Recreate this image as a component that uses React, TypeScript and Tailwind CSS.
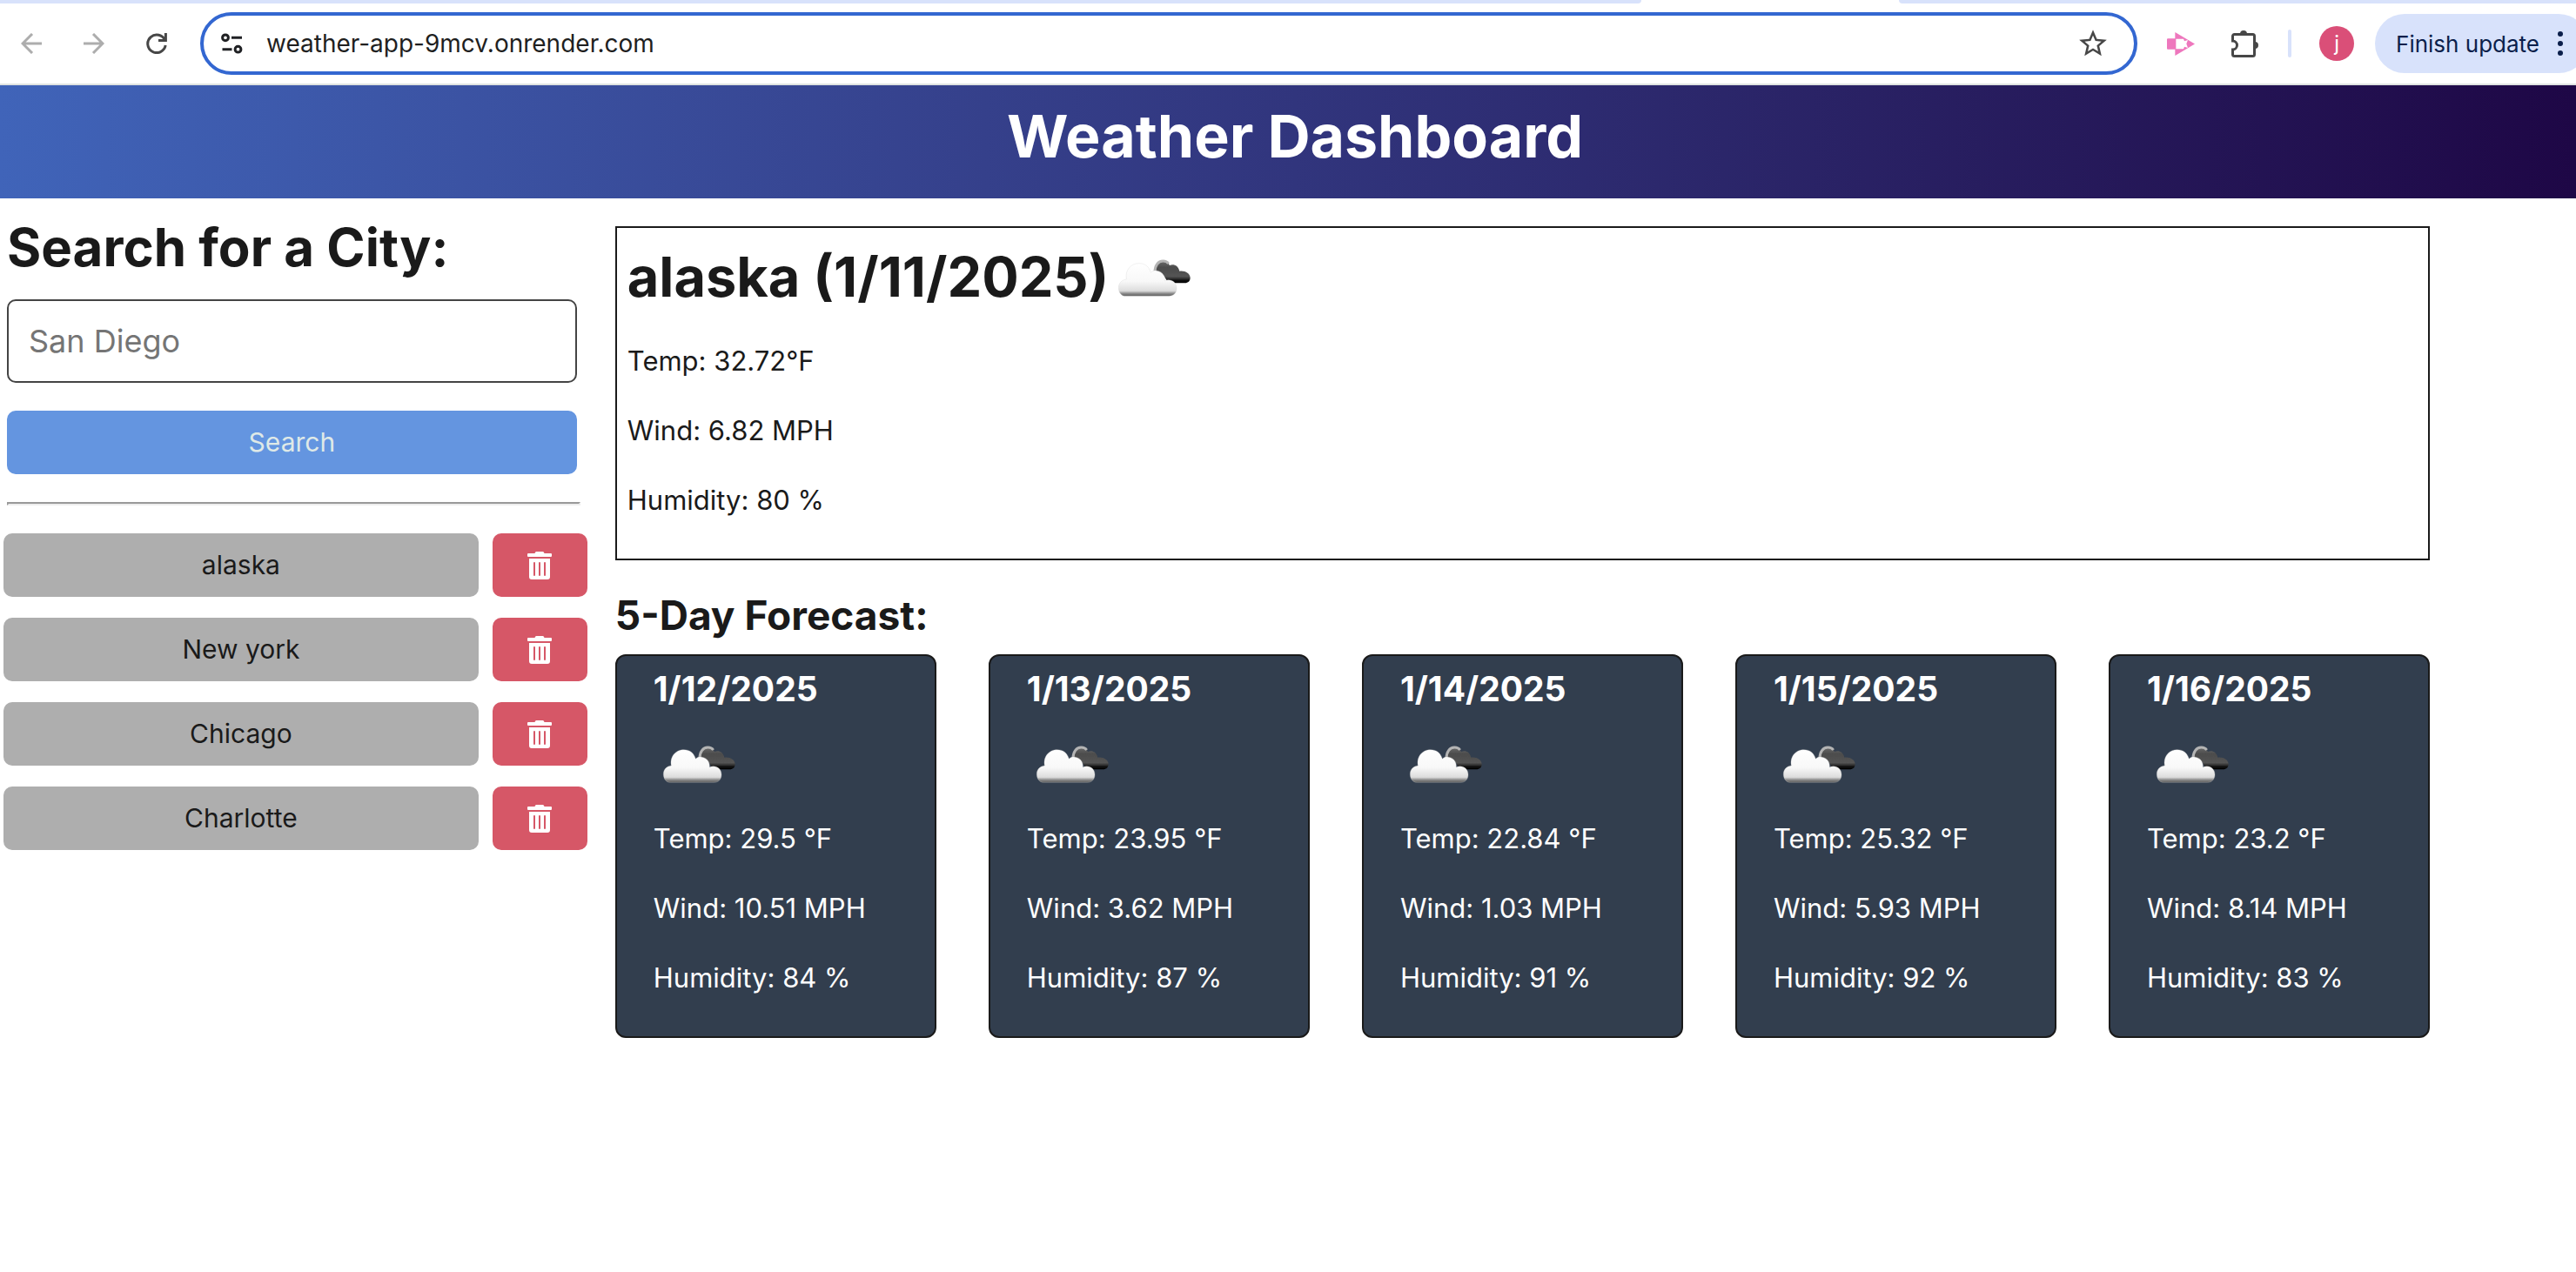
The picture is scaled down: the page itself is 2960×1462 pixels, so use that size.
import { useId } from "react";
import { FaTrashAlt } from "react-icons/fa";
import { MdStarBorder } from "react-icons/md";

const cities = ["alaska", "New york", "Chicago", "Charlotte"];

const forecast = [
  { date: "1/12/2025", temp: "29.5", wind: "10.51", humidity: "84" },
  { date: "1/13/2025", temp: "23.95", wind: "3.62", humidity: "87" },
  { date: "1/14/2025", temp: "22.84", wind: "1.03", humidity: "91" },
  { date: "1/15/2025", temp: "25.32", wind: "5.93", humidity: "92" },
  { date: "1/16/2025", temp: "23.2", wind: "8.14", humidity: "83" },
];

function CloudIcon({ className = "" }: { className?: string }) {
  const id = useId();
  const front =
    "M58 163 C43 163 34 150 34 134 C34 118 45 107 61 105 C55 72 78 50 104 50 C125 50 140 62 145 82 C152 74 162 74 172 77 C187 82 194 94 193 110 C214 102 234 114 234 136 C234 152 224 163 208 163 Z";
  const back =
    "M158 76 C160 56 172 42 187 42 C198 42 206 48 210 57 C224 51 240 58 244 77 C262 74 281 84 281 100 C281 111 274 118 262 118 L205 118 L190 92 Z";
  return (
    <svg viewBox="0 0 312 192" className={`h-16 w-[104px] shrink-0 ${className}`} role="img" aria-label="broken clouds">
      <defs>
        <linearGradient id={`${id}f`} x1="0" y1="50" x2="0" y2="163" gradientUnits="userSpaceOnUse">
          <stop offset="0" stopColor="#ffffff" />
          <stop offset="0.55" stopColor="#f8f8f8" />
          <stop offset="0.84" stopColor="#dcdcdc" />
          <stop offset="0.92" stopColor="#8c8c8c" />
          <stop offset="1" stopColor="#5c5c5c" />
        </linearGradient>
        <linearGradient id={`${id}b`} x1="0" y1="42" x2="0" y2="118" gradientUnits="userSpaceOnUse">
          <stop offset="0" stopColor="#6a6a6a" />
          <stop offset="0.3" stopColor="#4c4c4c" />
          <stop offset="0.7" stopColor="#545454" />
          <stop offset="0.9" stopColor="#0c0c0c" />
          <stop offset="1" stopColor="#000000" />
        </linearGradient>
        <filter id={`${id}s`} x="-10%" y="-10%" width="120%" height="120%">
          <feGaussianBlur stdDeviation="1.6" />
        </filter>
      </defs>
      <g filter={`url(#${id}s)`}>
        <path d={back} fill={`url(#${id}b)`} />
        <path d="M159 80 C159 58 170 42 187 42 C195 42 202 45 206 51" fill="none" stroke="#b4b4b4" strokeWidth="9" />
        <path d={front} fill={`url(#${id}f)`} stroke="#d0d0d0" strokeWidth="1.5" strokeOpacity="0.6" />
      </g>
    </svg>
  );
}

function BrowserBar() {
  return (
    <div className="overflow-hidden border-b-2 border-[#dfe3e1] bg-white">
      <div className="flex h-1 justify-between">
        <div className="w-[63.7%] rounded-br-xl bg-[#d8e2fb]" />
        <div className="w-[26.3%] rounded-bl-xl bg-[#d8e2fb]" />
      </div>
      <div className="flex h-[92px] items-center pl-6">
        <div className="flex items-center gap-12">
          <button type="button" aria-label="Back">
            <svg viewBox="0 0 24 24" className="size-6" fill="none" stroke="#adadad" strokeWidth="3">
              <path d="M13 1 L2 12 L13 23 M2 12 H24" />
            </svg>
          </button>
          <button type="button" aria-label="Forward">
            <svg viewBox="0 0 24 24" className="size-6" fill="none" stroke="#adadad" strokeWidth="3">
              <path d="M11 1 L22 12 L11 23 M22 12 H0" />
            </svg>
          </button>
          <button type="button" aria-label="Reload">
            <svg viewBox="0 0 24 24" className="size-6" fill="none" stroke="#474747" strokeWidth="3">
              <path d="M22.4 0 V8.6 H14" />
              <path d="M21.6 8.4 A10.3 10.3 0 1 0 22.2 14" />
            </svg>
          </button>
        </div>

        <div className="ml-[38px] flex h-[72px] flex-1 items-center rounded-full border-4 border-[#3367d1] pr-7 pl-5">
          <button type="button" aria-label="View site information">
            <svg viewBox="0 0 26 26" className="size-[26px]" fill="none" stroke="#202124" strokeWidth="3">
              <circle cx="5" cy="6.3" r="3.4" />
              <path d="M12 6.3 H24 M1.5 19.7 H12.5" />
              <circle cx="19.5" cy="19.7" r="3.4" />
            </svg>
          </button>
          <input
            type="text"
            aria-label="Address and search bar"
            defaultValue="weather-app-9mcv.onrender.com"
            className="ml-[26px] min-w-0 flex-1 bg-transparent text-[28px] leading-10 text-[#1f1f1f] outline-none"
          />
          <button type="button" aria-label="Bookmark this tab">
            <MdStarBorder size={38} color="#474747" />
          </button>
        </div>

        <button type="button" aria-label="Screen recorder extension" className="ml-[34px]">
          <svg viewBox="0 0 96 81" className="h-[27px] w-8">
            <path d="M3 22 H28 V59 H3 a3 3 0 0 1-3-3 V25 a3 3 0 0 1 3-3 Z M28 0 L96 40.5 L28 81 Z" fill="#ee77bd" />
            <path d="M31 23 H57 L60 31 L72 27 L67 40 L72 54 L60 50 L57 58 H31 Z" fill="#ffffff" />
          </svg>
        </button>
        <button type="button" aria-label="Extensions" className="ml-[41px]">
          <svg viewBox="0 0 34 34" className="size-[34px]" fill="none" stroke="#474747" strokeWidth="3">
            <path d="M4.5 6.5 H25.5 a2 2 0 0 1 2 2 V29.5 a2 2 0 0 1-2 2 H4.5 a2 2 0 0 1-2-2 V24 A5 5 0 0 0 2.5 14 V8.5 a2 2 0 0 1 2-2 Z" />
            <path d="M11 6 a4 4 0 0 1 8 0 Z M28 15 a4 4 0 0 1 0 8 Z" fill="#474747" stroke="none" />
          </svg>
        </button>
        <div className="ml-8 h-8 w-1 rounded-full bg-[#d8e2fb]" />
        <button
          type="button"
          aria-label="Profile j"
          className="ml-8 size-10 rounded-full bg-[#da4f78] text-center text-2xl leading-10 text-white"
        >
          j
        </button>
        <button
          type="button"
          className="-mr-[14px] ml-6 flex h-[68px] items-center rounded-full bg-[#d8e2fb] pr-7 pl-6 text-[26px] text-[#0b1f4b]"
        >
          Finish update
          <svg viewBox="0 0 8 28" className="ml-5 h-7 w-2" fill="#0b1f4b">
            <circle cx="4" cy="3" r="3" />
            <circle cx="4" cy="14" r="3" />
            <circle cx="4" cy="25" r="3" />
          </svg>
        </button>
      </div>
    </div>
  );
}

function Sidebar() {
  return (
    <aside className="pt-5">
      <form className="mr-[18px] ml-2" onSubmit={(e) => e.preventDefault()}>
        <label htmlFor="city" className="block text-[60px] leading-[72px] font-bold">
          Search for a City:
        </label>
        <input
          id="city"
          type="text"
          placeholder="San Diego"
          className="mt-6 block h-24 w-full rounded-[10px] border-2 border-[#444444] px-[23px] text-[36px] placeholder:text-[#757575]"
        />
        <button
          type="submit"
          className="mt-8 block w-full rounded-[10px] bg-[#6495e0] text-[30px] leading-[73px] text-[#dfe9e7]"
        >
          Search
        </button>
      </form>
      <hr className="mt-8 mr-[14px] ml-2 border-2 border-t-[#999999] border-r-[#eeeeee] border-b-[#eeeeee] border-l-[#999999]" />
      <ul className="mt-8 mr-[6px] ml-1 flex flex-col gap-6">
        {cities.map((city) => (
          <li key={city} className="flex gap-4">
            <button type="button" className="flex-1 rounded-[10px] bg-[#aeaeae] text-[30px] leading-[73px]">
              {city}
            </button>
            <button
              type="button"
              aria-label={`Delete ${city}`}
              className="flex w-[109px] items-center justify-center rounded-[10px] bg-[#d65767] text-white"
            >
              <FaTrashAlt size={32} />
            </button>
          </li>
        ))}
      </ul>
    </aside>
  );
}

export default function App() {
  return (
    <div className="min-h-screen bg-white font-[Inter,sans-serif] text-[#1a1a1a]">
      <BrowserBar />
      <header className="bg-linear-to-r from-[#4064b9] to-[#1e0746] pt-[18px] pb-8 pl-4 text-center text-white">
        <h1 className="text-[68px] leading-[80px] font-bold">Weather Dashboard</h1>
      </header>
      <div className="grid grid-cols-[23fr_77fr]">
        <Sidebar />
        <main className="pt-8 pr-[168px] pl-[26px]">
          <section className="border-2 border-[#1a1a1a] pt-[18px] pb-[43px] pl-3">
            <h2 className="flex items-center text-[63px] leading-[76px] font-bold">
              alaska (1/11/2025)
              <CloudIcon />
            </h2>
            <div className="mt-[35px] flex flex-col gap-8 text-[31px] leading-[48px]">
              <p>Temp: 32.72°F</p>
              <p>Wind: 6.82 MPH</p>
              <p>Humidity: 80 %</p>
            </div>
          </section>
          <section className="mt-[35px]">
            <h2 className="text-[46px] leading-[56px] font-bold">5-Day Forecast:</h2>
            <div className="mt-[17px] grid grid-cols-5 gap-[60px]">
              {forecast.map((day) => (
                <article
                  key={day.date}
                  className="rounded-xl border-2 border-[#1a1a1a] bg-[#323e4e] pt-[14px] pb-[43px] pl-[42px] text-white"
                >
                  <h3 className="text-[39px] leading-[48px] font-bold">{day.date}</h3>
                  <CloudIcon className="mt-[29px]" />
                  <div className="mt-[31px] flex flex-col gap-8 text-[31px] leading-[48px]">
                    <p>Temp: {day.temp} °F</p>
                    <p>Wind: {day.wind} MPH</p>
                    <p>Humidity: {day.humidity} %</p>
                  </div>
                </article>
              ))}
            </div>
          </section>
        </main>
      </div>
    </div>
  );
}
